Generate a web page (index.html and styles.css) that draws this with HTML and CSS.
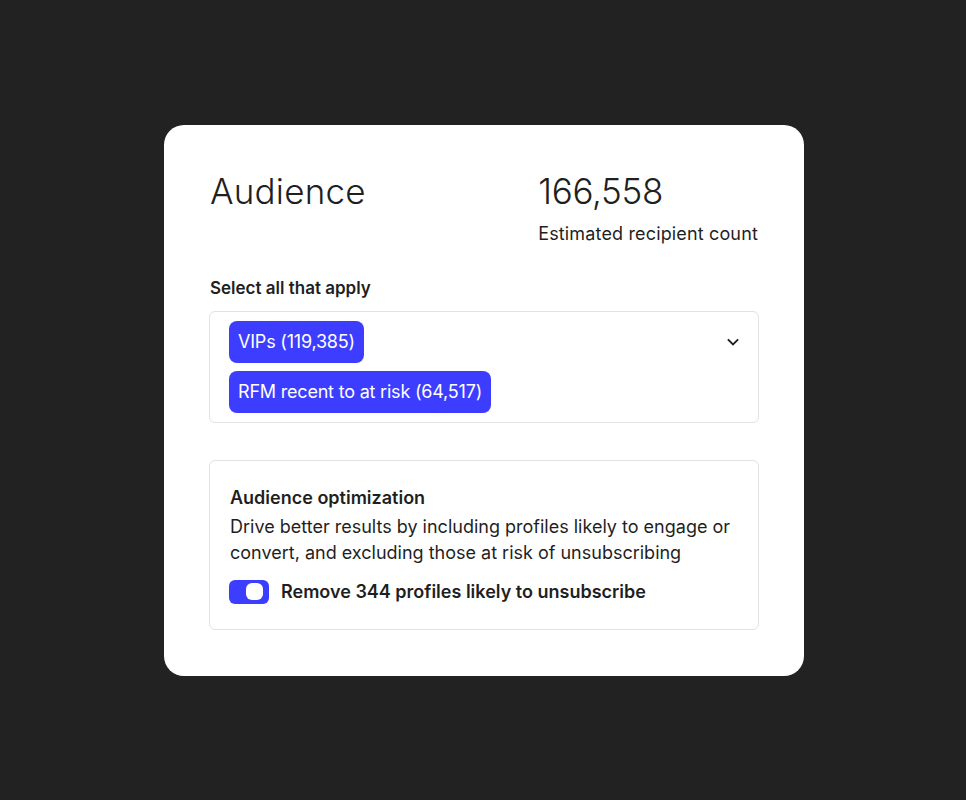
FILE: index.html
```html
<!DOCTYPE html>
<html lang="en">
<head>
<meta charset="utf-8">
<title>Audience</title>
<link rel="stylesheet" href="styles.css">
</head>
<body>
<main class="stage">
  <section class="card">
    <header class="head">
      <h1 class="title">Audience</h1>
      <div class="count">
        <div class="count-num">166,558</div>
        <div class="count-label">Estimated recipient count</div>
      </div>
    </header>

    <div class="field">
      <div class="field-label">Select all that apply</div>
      <div class="select">
        <div class="chips">
          <span class="chip">VIPs (119,385)</span>
          <span class="chip">RFM recent to at risk (64,517)</span>
        </div>
        <svg class="chev" width="14" height="14" viewBox="0 0 14 14" aria-hidden="true">
          <path d="M2.5 5 L7 9.5 L11.5 5" fill="none" stroke="#1f1f1f" stroke-width="1.8" stroke-linecap="square"/>
        </svg>
      </div>
    </div>

    <div class="opt">
      <div class="opt-title">Audience optimization</div>
      <p class="opt-desc">Drive better results by including profiles likely to engage or convert, and excluding those at risk of unsubscribing</p>
      <label class="opt-row">
        <span class="toggle"><span class="knob"></span></span>
        <span class="opt-text">Remove 344 profiles likely to unsubscribe</span>
      </label>
    </div>
  </section>
</main>
</body>
</html>
```

FILE: styles.css
```css
* { box-sizing: border-box; }
html, body { margin: 0; padding: 0; }
body {
  background: #222222;
  font-family: Inter, "Noto Sans", "Liberation Sans", sans-serif;
  color: #1f1f1f;
}
.stage {
  min-height: 100vh;
  display: flex;
  align-items: center;
  justify-content: center;
  padding-left: 2px;
}
.card {
  width: 640px;
  background: #ffffff;
  border-radius: 20px;
  padding: 45px 45px 46px;
}
.head {
  display: flex;
  justify-content: space-between;
  align-items: flex-start;
}
.title {
  margin: 0;
  font-size: 35px;
  line-height: 42px;
  font-weight: 300;
  letter-spacing: 0.2px;
  padding-left: 1px;
}
.count { padding-right: 1px; }
.count-num {
  font-size: 35px;
  line-height: 42px;
  font-weight: 300;
  letter-spacing: -0.3px;
}
.count-label {
  margin-top: 10px;
  font-size: 18px;
  line-height: 24px;
  letter-spacing: 0.15px;
}
.field { margin-top: 30px; }
.field-label {
  font-size: 17px;
  line-height: 24px;
  font-weight: 600;
  margin-bottom: 11px;
  padding-left: 1px;
}
.select {
  border: 1px solid #e2e2e2;
  border-radius: 6px;
  padding: 9px 18px 9px 19px;
  display: flex;
  justify-content: space-between;
  align-items: flex-start;
}
.chips {
  display: flex;
  flex-direction: column;
  align-items: flex-start;
  gap: 8px;
}
.chip {
  display: inline-flex;
  align-items: center;
  height: 42px;
  padding: 0 9px;
  border-radius: 8px;
  background: #3d3dff;
  color: #ffffff;
  font-size: 18px;
  letter-spacing: -0.2px;
}
.chev { margin-top: 14px; }
.opt {
  margin-top: 37px;
  border: 1px solid #e2e2e2;
  border-radius: 6px;
  padding: 24px 20px 25px;
}
.opt-title {
  font-size: 18px;
  line-height: 26px;
  font-weight: 600;
  margin-bottom: 3px;
}
.opt-desc {
  margin: 0;
  font-size: 18px;
  line-height: 26px;
}
.opt-row {
  margin-top: 14px;
  display: flex;
  align-items: center;
  gap: 12px;
}
.toggle {
  width: 40px;
  height: 24px;
  margin-left: -1px;
  border-radius: 6px;
  background: #3d3dff;
  display: flex;
  align-items: center;
  justify-content: flex-end;
  padding-right: 6px;
}
.knob {
  width: 17px;
  height: 17px;
  border-radius: 6px;
  background: #ffffff;
}
.opt-text {
  font-size: 18px;
  line-height: 24px;
  font-weight: 600;
}
```
